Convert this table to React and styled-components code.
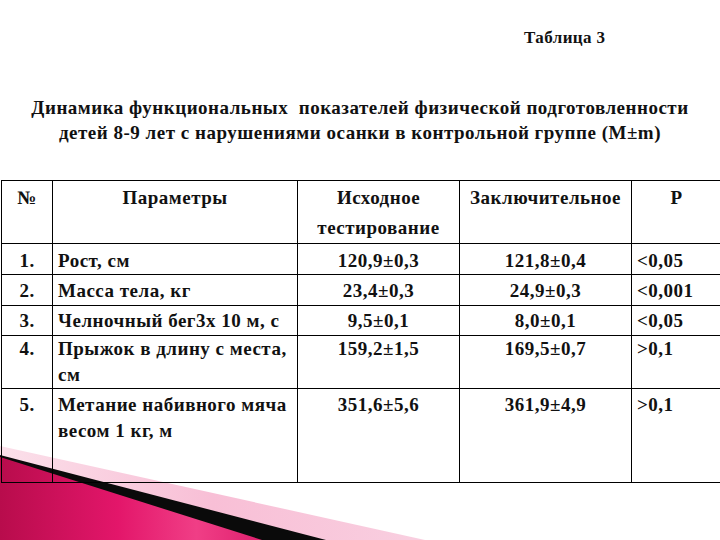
import React from 'react'
import styled, { createGlobalStyle } from 'styled-components'

const GlobalStyle = createGlobalStyle`
  html, body {
    margin: 0;
    padding: 0;
    background: #ffffff;
  }
`

const rows = [
  { n: '1.', param: ['Рост, см'], start: '120,9±0,3', end: '121,8±0,4', p: '<0,05', h: 31, pad: 4 },
  { n: '2.', param: ['Масса тела, кг'], start: '23,4±0,3', end: '24,9±0,3', p: '<0,001', h: 31, pad: 3 },
  { n: '3.', param: ['Челночный бег3х 10 м, с'], start: '9,5±0,1', end: '8,0±0,1', p: '<0,05', h: 30, pad: 2 },
  { n: '4.', param: ['Прыжок в длину с места,', 'см'], start: '159,2±1,5', end: '169,5±0,7', p: '>0,1', h: 53, pad: 0 },
  { n: '5.', param: ['Метание набивного мяча', 'весом 1 кг, м'], start: '351,6±5,6', end: '361,9±4,9', p: '>0,1', h: 94, pad: 3 },
]

const Corner = () => (
  <Decor viewBox="0 0 720 100" width="720" height="100">
    <defs>
      <linearGradient id="pinkFill" x1="0" y1="0" x2="1" y2="0">
        <stop offset="0" stopColor="#b80c4c" />
        <stop offset="0.45" stopColor="#e3166a" />
        <stop offset="0.75" stopColor="#f03e86" />
        <stop offset="1" stopColor="#e0206e" />
      </linearGradient>
      <linearGradient id="softFill" x1="0" y1="0" x2="1" y2="0">
        <stop offset="0" stopColor="#fbe0ea" />
        <stop offset="0.5" stopColor="#f8bfd6" />
        <stop offset="1" stopColor="#f9cfe0" />
      </linearGradient>
    </defs>
    <polygon points="0,6 425,100 0,100" fill="url(#softFill)" />
    <polygon points="0,15 326,100 0,100" fill="#0a0a0a" />
    <polygon points="0,17 262,100 0,100" fill="url(#pinkFill)" />
  </Decor>
)

const App = () => {
  return (
    <>
      <GlobalStyle />
      <Page>
        <Corner />
        <Label>Таблица 3</Label>
        <Heading>
          <div>Динамика функциональных&nbsp; показателей физической подготовленности</div>
          <div>детей 8-9 лет с нарушениями осанки в контрольной группе (М±m)</div>
        </Heading>
        <Table>
          <colgroup>
            <col style={{ width: 51 }} />
            <col style={{ width: 245 }} />
            <col style={{ width: 162 }} />
            <col style={{ width: 172 }} />
            <col style={{ width: 90 }} />
          </colgroup>
          <thead>
            <tr>
              <HeadCell $h={63}>№</HeadCell>
              <HeadCell>Параметры</HeadCell>
              <HeadCell>Исходное<br />тестирование</HeadCell>
              <HeadCell>Заключительное</HeadCell>
              <HeadCell>P</HeadCell>
            </tr>
          </thead>
          <tbody>
            {rows.map((r) => (
              <tr key={r.n}>
                <Cell $h={r.h} $pad={r.pad} $align="center">{r.n}</Cell>
                <Cell $pad={r.pad} $align="left">
                  {r.param.map((line) => (
                    <div key={line}>{line}</div>
                  ))}
                </Cell>
                <Cell $pad={r.pad} $align="center">{r.start}</Cell>
                <Cell $pad={r.pad} $align="center">{r.end}</Cell>
                <Cell $pad={r.pad} $align="left">{r.p}</Cell>
              </tr>
            ))}
          </tbody>
        </Table>
      </Page>
    </>
  )
}

export default App

const Page = styled.div`
  position: relative;
  width: 720px;
  height: 540px;
  overflow: hidden;
  background: #ffffff;
  color: #111;
  font-family: "Liberation Serif", "Times New Roman", serif;
  font-weight: bold;
  padding-top: 28px;
  box-sizing: border-box;
`
const Decor = styled.svg`
  position: absolute;
  left: 0;
  bottom: 0;
  z-index: 0;
`
const Label = styled.div`
  position: relative;
  padding-left: 524px;
  font-size: 17px;
  line-height: 20px;
  letter-spacing: 0.4px;
`
const Heading = styled.div`
  position: relative;
  margin-top: 47px;
  text-align: center;
  font-size: 19px;
  line-height: 25px;
  letter-spacing: 0.5px;
`
const Table = styled.table`
  position: relative;
  z-index: 1;
  margin-top: 35px;
  margin-left: 1px;
  width: 720px;
  border-collapse: collapse;
  table-layout: fixed;
  font-size: 19px;
  letter-spacing: 0.5px;
`
const HeadCell = styled.th`
  height: ${(p) => (p.$h ? `${p.$h}px` : 'auto')};
  box-sizing: border-box;
  border: 1px solid #000;
  padding: 2px 4px 0;
  vertical-align: top;
  text-align: center;
  line-height: 30px;
  font-weight: bold;
`
const Cell = styled.td`
  height: ${(p) => (p.$h ? `${p.$h}px` : 'auto')};
  box-sizing: border-box;
  border: 1px solid #000;
  padding: ${(p) => p.$pad}px 5px 0;
  vertical-align: top;
  text-align: ${(p) => p.$align};
  line-height: 26px;
`
